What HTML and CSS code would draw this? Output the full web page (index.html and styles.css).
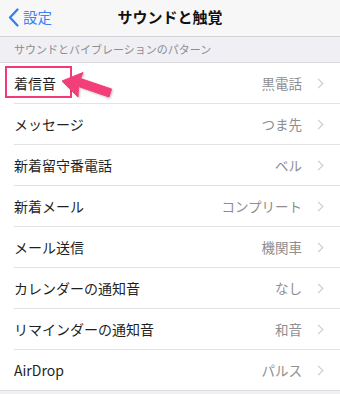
FILE: index.html
```html
<!DOCTYPE html>
<html lang="ja">
<head>
<meta charset="utf-8">
<link rel="stylesheet" href="styles.css">
</head>
<body>
<div class="screen">
  <header class="nav">
    <div class="back">
      <svg class="back-chev" width="11" height="19" viewBox="0 0 11 19"><path d="M9.5 1.5 L2 9.5 L9.5 17.5" fill="none" stroke="#2f7cf6" stroke-width="2.2" stroke-linecap="round" stroke-linejoin="round"/></svg>
      <span class="back-label">設定</span>
    </div>
    <div class="title">サウンドと触覚</div>
  </header>
  <div class="section-head">サウンドとバイブレーションのパターン</div>
  <ul class="list">
    <li class="row highlighted">
      <span class="label">着信音</span><span class="value">黒電話</span><span class="chev"></span>
      <span class="mark"></span>
      <svg class="arrow" width="60" height="36" viewBox="0 0 60 36"><path d="M1 9 L22 0.5 L19.5 6.5 L50.5 17 L48 25 L17.5 14.5 L17 25 Z" fill="#f33e7a" stroke="#f33e7a" stroke-width="1" stroke-linejoin="round"/></svg>
    </li>
    <li class="row"><span class="label">メッセージ</span><span class="value">つま先</span><span class="chev"></span></li>
    <li class="row"><span class="label">新着留守番電話</span><span class="value">ベル</span><span class="chev"></span></li>
    <li class="row"><span class="label">新着メール</span><span class="value">コンプリート</span><span class="chev"></span></li>
    <li class="row"><span class="label">メール送信</span><span class="value">機関車</span><span class="chev"></span></li>
    <li class="row"><span class="label">カレンダーの通知音</span><span class="value">なし</span><span class="chev"></span></li>
    <li class="row"><span class="label">リマインダーの通知音</span><span class="value">和音</span><span class="chev"></span></li>
    <li class="row last"><span class="label">AirDrop</span><span class="value">パルス</span><span class="chev"></span></li>
  </ul>
</div>
</body>
</html>
```
FILE: styles.css
```css
* { box-sizing: border-box; }
html, body { margin: 0; padding: 0; }
body {
  width: 340px;
  height: 394px;
  overflow: hidden;
  background: #efeff4;
  font-family: "Noto Sans CJK JP", "Noto Sans", sans-serif;
  -webkit-font-smoothing: antialiased;
}
.screen { width: 340px; }
.nav {
  height: 37px;
  background: #f7f7f8;
  border-bottom: 1px solid #d4d4d8;
  display: flex;
  align-items: center;
  justify-content: center;
  position: relative;
}
.back {
  position: absolute;
  left: 8px;
  top: 7px;
  display: flex;
  align-items: center;
  gap: 4px;
}
.back-label {
  color: #3b82f3;
  font-size: 14.5px;
  line-height: 20px;
}
.title {
  font-size: 15px;
  font-weight: 700;
  color: #111;
  line-height: 20px;
  margin-top: -2px;
}
.section-head {
  height: 26px;
  padding-left: 14px;
  font-size: 11px;
  line-height: 25px;
  color: #8d8d92;
  background: #efeff4;
  border-bottom: 1px solid #dcdce0;
}
.list {
  list-style: none;
  margin: 0;
  padding: 0;
  background: #fff;
}
.row {
  height: 41px;
  display: flex;
  align-items: center;
  margin-left: 14px;
  padding-right: 16px;
  border-bottom: 1px solid #e3e3e6;
  position: relative;
}
.row.last { border-bottom: 1px solid #dcdce0; margin-left: 0; padding-left: 14px; }
.label {
  flex: 1;
  font-size: 14px;
  color: #1f1f1f;
  line-height: 20px;
}
.value {
  font-size: 13.5px;
  color: #8e8e93;
  line-height: 20px;
  margin-right: 13px;
}
.chev {
  width: 7px;
  height: 7px;
  border-right: 1.2px solid #c7c7cc;
  border-top: 1.2px solid #c7c7cc;
  transform: rotate(45deg);
  margin-right: 2px;
}
.mark {
  position: absolute;
  left: -9px;
  top: 3px;
  width: 67px;
  height: 32px;
  border: 2.5px solid #f2397a;
}
.arrow {
  position: absolute;
  left: 47px;
  top: 9px;
  filter: drop-shadow(1px 1px 1px rgba(0,0,0,0.25));
}
```
